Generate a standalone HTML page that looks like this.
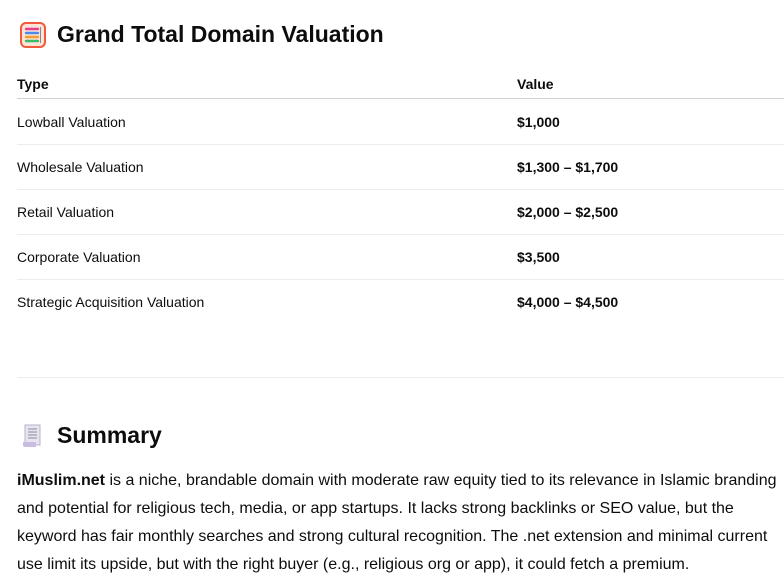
<!DOCTYPE html>
<html><head><meta charset="utf-8"><style>
body{margin:0;width:784px;height:581px;overflow:hidden;background:#fff;font-family:"Liberation Sans",sans-serif;color:#0d0d0d;position:relative}
.h{position:absolute;left:57px;font-size:23px;font-weight:700;white-space:nowrap}
.ic{position:absolute}
.t{position:absolute;left:17px;width:800px;font-size:14px}
.row{position:absolute;left:0;width:800px;height:45px;border-bottom:1px solid #ececec}
.row span{position:absolute;top:50%;transform:translateY(-50%)}
.v{left:500px;font-weight:700}
p{position:absolute;left:17px;top:467px;margin:0;width:765px;font-size:16px;line-height:28px}
</style></head><body>
<svg class="ic" style="left:20px;top:22px" width="26" height="26" viewBox="0 0 26 26">
<rect x="1" y="1" width="24" height="24" rx="5" fill="#fde3d8" stroke="#f05a3a" stroke-width="2"/>
<g stroke-width="2.4" stroke-linecap="round">
<line x1="6" y1="7" x2="18" y2="7" stroke="#e83e8c"/>
<line x1="6" y1="11" x2="18" y2="11" stroke="#4a8ce8"/>
<line x1="6" y1="15" x2="18" y2="15" stroke="#f0a030"/>
<line x1="6" y1="19" x2="18" y2="19" stroke="#3cba6c"/>
</g>
<line x1="20.5" y1="5" x2="20.5" y2="21" stroke="#888" stroke-width="1"/>
</svg>
<div class="h" style="top:21px">Grand Total Domain Valuation</div>
<div class="t" style="top:70px">
<div class="row" style="top:0;height:28px;border-bottom:1px solid #d0d0d0;font-weight:700"><span>Type</span><span class="v">Value</span></div>
<div class="row" style="top:29px"><span>Lowball Valuation</span><span class="v">$1,000</span></div>
<div class="row" style="top:74px"><span>Wholesale Valuation</span><span class="v">$1,300 – $1,700</span></div>
<div class="row" style="top:119px"><span>Retail Valuation</span><span class="v">$2,000 – $2,500</span></div>
<div class="row" style="top:164px"><span>Corporate Valuation</span><span class="v">$3,500</span></div>
<div class="row" style="top:209px;border:none"><span>Strategic Acquisition Valuation</span><span class="v">$4,000 – $4,500</span></div>
</div>
<div style="position:absolute;left:17px;top:377px;width:780px;border-top:1px solid #ececec"></div>
<svg class="ic" style="left:20px;top:423px" width="24" height="26" viewBox="0 0 24 26">
<rect x="5" y="2" width="15" height="20" fill="#e8e4f0" stroke="#b8b0cc"/>
<path d="M3 19h13v5H5a2 2 0 0 1-2-2z" fill="#c8bde0"/>
<g stroke="#8a8a9a" stroke-width="1"><line x1="8" y1="6" x2="17" y2="6"/><line x1="8" y1="9" x2="17" y2="9"/><line x1="8" y1="12" x2="17" y2="12"/><line x1="8" y1="15" x2="17" y2="15"/></g>
</svg>
<div class="h" style="top:422px">Summary</div>
<p><b>iMuslim.net</b> is a niche, brandable domain with moderate raw equity tied to its relevance in Islamic branding and potential for religious tech, media, or app startups. It lacks strong backlinks or SEO value, but the keyword has fair monthly searches and strong cultural recognition. The .net extension and minimal current use limit its upside, but with the right buyer (e.g., religious org or app), it could fetch a premium.</p>
</body></html>
